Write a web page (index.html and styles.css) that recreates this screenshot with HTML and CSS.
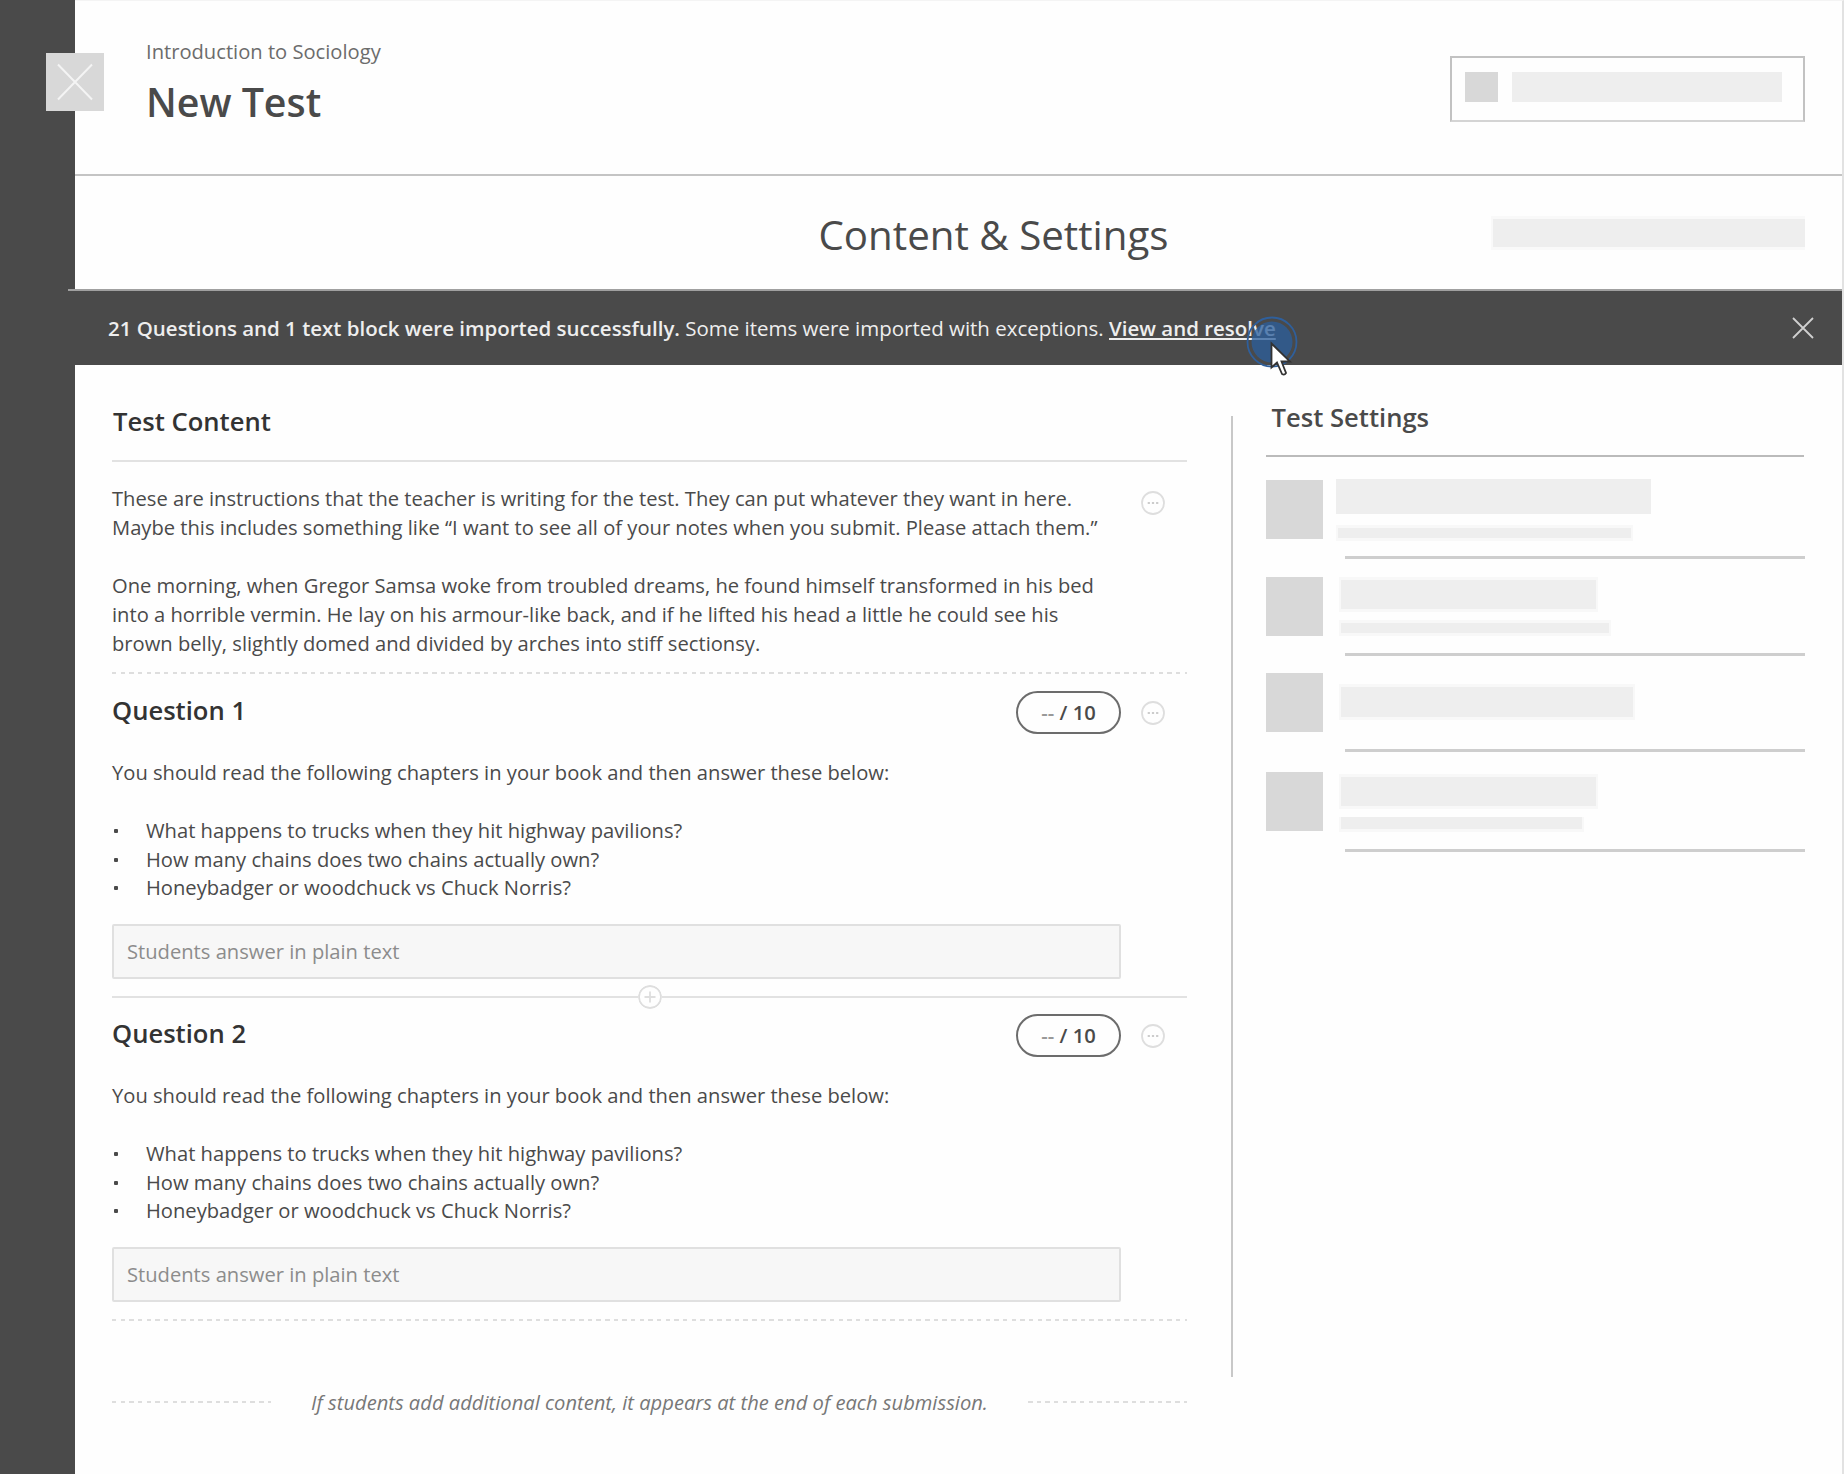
FILE: index.html
```html
<!DOCTYPE html>
<html lang="en">
<head>
<meta charset="utf-8">
<title>New Test</title>
<link rel="stylesheet" href="styles.css">
</head>
<body>
<div class="app">
  <aside class="rail">
    <button class="rail-close" aria-label="Close">
      <svg width="36" height="38" viewBox="0 0 36 38"><path d="M1 1.500 35 36.500M35 1.500 1 36.500"/></svg>
    </button>
  </aside>
  <main class="main">
    <header class="header">
      <div class="titles">
        <p class="course">Introduction to Sociology</p>
        <h1 class="title">New Test</h1>
      </div>
      <div class="status"><i class="status-icon"></i><i class="status-text"></i></div>
    </header>
    <div class="toolbar">
      <h2 class="toolbar-title">Content &amp; Settings</h2>
      <i class="toolbar-text"></i>
    </div>
    <div class="notice">
      <p class="notice-text"><strong>21 Questions and 1 text block were imported successfully.</strong> Some items were imported with exceptions. <a class="notice-link">View and resolve</a></p>
      <svg class="notice-close" width="22" height="22" viewBox="0 0 22 22"><path d="M1 1 21 21M21 1 1 21"/></svg>
      <svg class="pointer" width="54" height="64" viewBox="0 0 54 64">
        <circle class="tap" cx="26" cy="26" r="20.500"/>
        <circle class="tap-ring" cx="26" cy="26" r="24.500"/>
        <path class="arrow" d="M25.500 27.500V51.500l5.500-5 5 11.500q2.500 1.500 4-1L35.500 45.500h8.500z"/>
      </svg>
    </div>
    <div class="columns">
      <section class="content">
        <h3 class="heading">Test Content</h3>
        <div class="instructions">
          <div class="prose">
            <p>These are instructions that the teacher is writing for the test. They can put whatever they want in here.<br>Maybe this includes something like “I want to see all of your notes when you submit. Please attach them.”</p>
            <p>One morning, when Gregor Samsa woke from troubled dreams, he found himself transformed in his bed<br>into a horrible vermin. He lay on his armour-like back, and if he lifted his head a little he could see his<br>brown belly, slightly domed and divided by arches into stiff sectionsy.</p>
          </div>
          <svg class="more" viewBox="0 0 24 24"><circle cx="12" cy="12" r="11"/><path d="M6.700 12h2.200M10.900 12h2.200M15.100 12h2.200"/></svg>
        </div>
        <article class="question">
          <div class="question-head">
            <h4 class="question-title">Question 1</h4>
            <div class="points"><span class="dash">--</span> / 10</div>
            <svg class="more" viewBox="0 0 24 24"><circle cx="12" cy="12" r="11"/><path d="M6.700 12h2.200M10.900 12h2.200M15.100 12h2.200"/></svg>
          </div>
          <p class="prompt">You should read the following chapters in your book and then answer these below:</p>
          <ul class="list">
            <li>What happens to trucks when they hit highway pavilions?</li>
            <li>How many chains does two chains actually own?</li>
            <li>Honeybadger or woodchuck vs Chuck Norris?</li>
          </ul>
          <div class="answer">Students answer in plain text</div>
        </article>
        <div class="insert"><svg class="plus" viewBox="0 0 24 24"><circle cx="12" cy="12" r="11"/><path d="M12 6.500v11M6.500 12h11"/></svg></div>
        <article class="question last">
          <div class="question-head">
            <h4 class="question-title">Question 2</h4>
            <div class="points"><span class="dash">--</span> / 10</div>
            <svg class="more" viewBox="0 0 24 24"><circle cx="12" cy="12" r="11"/><path d="M6.700 12h2.200M10.900 12h2.200M15.100 12h2.200"/></svg>
          </div>
          <p class="prompt">You should read the following chapters in your book and then answer these below:</p>
          <ul class="list">
            <li>What happens to trucks when they hit highway pavilions?</li>
            <li>How many chains does two chains actually own?</li>
            <li>Honeybadger or woodchuck vs Chuck Norris?</li>
          </ul>
          <div class="answer">Students answer in plain text</div>
        </article>
        <div class="dashed"></div>
        <p class="footnote"><i class="dashed short"></i><em>If students add additional content, it appears at the end of each submission.</em><i class="dashed short"></i></p>
      </section>
      <div class="divider"></div>
      <aside class="settings">
        <h3 class="settings-heading">Test Settings</h3>
        <div class="setting first"><i class="thumb"></i><div class="bars"><i class="bar"></i><i class="sub"></i></div></div>
        <div class="setting second"><i class="thumb"></i><div class="bars"><i class="bar"></i><i class="sub"></i></div></div>
        <div class="setting third"><i class="thumb"></i><div class="bars"><i class="bar"></i></div></div>
        <div class="setting fourth"><i class="thumb"></i><div class="bars"><i class="bar"></i><i class="sub"></i></div></div>
      </aside>
    </div>
  </main>
</div>
</body>
</html>
```
FILE: styles.css
```css
* { box-sizing: border-box; }
body { margin: 0; background: #fefefe; color: #4a4a4a; font: 20.17px/28.85px "Open Sans", "Noto Sans", sans-serif; }
h1, h2, h3, h4, p, ul { margin: 0; padding: 0; font-weight: 600; }
p { font-weight: 400; }
i { display: block; }
svg { display: block; fill: none; }

.app { display: grid; grid-template-columns: 75px 1fr; width: 1844px; height: 1474px; overflow: hidden; }
.rail { position: relative; background: #4a4a4a; }
.rail-close { position: absolute; z-index: 1; left: 46px; top: 53px; display: grid; place-items: center; width: 58px; height: 58px; padding: 0; border: 0; background: #d8d8d8; }
.rail-close svg { stroke: #f4f4f4; stroke-width: 2; }
.main { border-right: 2px solid #e2e2e2; border-top: 1px solid #f4f4f4; }

.header { display: flex; justify-content: space-between; align-items: flex-start; height: 175px; padding: 36px 37px 0 71px; border-bottom: 2px solid #c4c4c4; }
.course { color: #6c6c6c; line-height: 28px; }
.title { margin-top: 12px; font-size: 39.3px; line-height: 50px; }
.status { display: flex; gap: 14px; width: 355px; height: 66px; margin-top: 19px; padding: 14px 13px; border: 2px solid #c2c2c2; border-bottom-color: #d4d4d4; }
.status-icon { width: 33px; height: 30px; background: #d8d8d8; }
.status-text { width: 270px; height: 30px; background: #eee; }

.toolbar { display: grid; grid-template-columns: 387px 1fr 313px; align-items: center; height: 115px; margin-left: -7px; padding: 0 37px 0 40px; border-bottom: 2px solid #a0a0a0; position: relative; }
.toolbar-title { grid-column: 2; padding-top: 5px; text-align: center; font-size: 40.3px; font-weight: 400; line-height: 54px; }
.toolbar-text { height: 34px; margin: 1px 0 0 -1px; border: solid #f9f9f9; border-width: 3px 0 3px 2px; background: #eee; }

.notice { position: relative; display: flex; justify-content: space-between; align-items: center; height: 74px; padding: 0 28px 0 33px; background: #4a4a4a; color: #eee; font-size: 20.48px; }
.notice strong { font-weight: 600; }
.notice-link { font-weight: 600; text-decoration: underline; }
.notice-close { margin-top: -1px; stroke: #d0d0d0; stroke-width: 1.8; }
.pointer { position: absolute; left: 1171px; top: 25px; }
.tap { fill: #2b5f9c; fill-opacity: .76; }
.tap-ring { stroke: #2f5f9b; stroke-width: 1.8; }
.arrow { fill: #fff; stroke: #333; stroke-width: 1.8; }

.columns { display: grid; grid-template-columns: 1156px 2px 1fr; align-items: start; }
.content { width: 1112px; padding: 42px 0 0 37px; }
.heading { height: 55px; padding-left: 1px; border-bottom: 2px solid #e2e2e2; font-size: 25.6px; line-height: 30px; color: #333; }
.instructions { display: flex; justify-content: space-between; height: 212px; padding: 22px 22px 0 0; }
.instructions .more { margin-top: 7px; }
.prose { display: grid; align-content: start; gap: 28.95px; line-height: 28.95px; white-space: nowrap; }
.more, .plus { flex: none; width: 24px; height: 24px; }
.more circle, .plus circle { stroke: #dedede; stroke-width: 1.8; }
.more path { stroke: #ccc; stroke-width: 2.2; }
.plus path { stroke: #dedede; stroke-width: 1.8; }
.dashed, .instructions { background: repeating-linear-gradient(90deg, #dedede 0 4.5px, transparent 4.5px 8.65px) left bottom / 100% 2px no-repeat; }
.question { height: 322px; padding-top: 17px; }
.question.last { height: 321px; padding-top: 16px; }
.question-head { display: flex; align-items: center; height: 43px; padding-right: 22px; }
.question-title { flex: 1; padding: 0 0 4px; font-size: 25.6px; line-height: 30px; color: #333; }
.points { width: 105px; height: 43px; margin-right: 20px; border: 2px solid #6c6c6c; border-radius: 22px; font-weight: 600; line-height: 38px; text-align: center; }
.dash { color: #999; }
.prompt { margin-top: 24px; }
.list { margin-top: 28.85px; list-style: none; }
.list li { display: flex; font-weight: 400; }
.list li::before { content: ""; width: 4px; height: 4px; margin: 13px 28px 0 2px; border-radius: 1px; background: #4a4a4a; }
.answer { width: 1009px; height: 55px; margin-top: 22px; padding-left: 13px; border: 2px solid #e0e0e0; border-radius: 2px; background: #f7f7f7; color: #8c8c8c; line-height: 51px; }
.insert { display: flex; align-items: center; justify-content: center; height: 2px; background: #e2e2e2; }
.plus { border-radius: 50%; background: #fefefe; }
.dashed { height: 2px; }
.footnote { display: flex; align-items: center; justify-content: space-between; margin-top: 66.5px; color: #777; }
.short { width: 159px; }

.divider { height: 961px; margin-top: 51px; background: #c8c8c8; }
.settings { padding: 38px 37px 0 33px; }
.settings-heading { height: 54px; margin-right: 1px; padding-left: 5.5px; border-bottom: 2px solid #bbb; font-size: 25.6px; line-height: 30px; }
.setting { display: flex; align-items: flex-start; height: 97px; background: linear-gradient(#cecece, #cecece) right bottom / 460px 3px no-repeat; }
.thumb { width: 57px; height: 59px; background: #d8d8d8; }
.bars { display: grid; gap: 8px; margin-left: 16px; }
.bar, .sub { border: solid #f8f8f8; border-width: 3px 2px; background: #eee; }
.bar { width: 259px; height: 35px; }
.sub { width: 272px; height: 16px; }
.first { height: 102px; padding-top: 23px; }
.first .bars { gap: 11px; margin: -1px 0 0 13px; }
.first .bar { width: 315px; border: 0; }
.first .sub { width: 297px; }
.second { padding-top: 18px; }
.third { height: 96px; padding-top: 17px; }
.third .bars { margin-top: 11px; }
.third .bar { width: 296px; height: 36px; }
.fourth { height: 100px; padding-top: 20px; }
.fourth .bars { margin-top: 2px; }
.fourth .sub { width: 245px; height: 15px; border-top: 0; }
```
